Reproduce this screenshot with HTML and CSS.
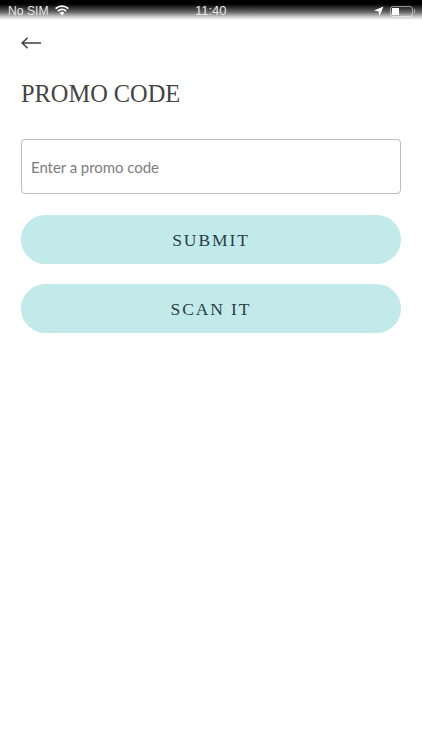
FILE: index.html
```html
<!DOCTYPE html>
<html lang="en">
<head>
<meta charset="utf-8">
<title>Promo code</title>
<link rel="stylesheet" href="styles.css">
</head>
<body>
<div class="status">
  <div class="status-left">
    <span>No SIM</span>
    <svg class="wifi" viewBox="0 0 16 12" width="16" height="12"><path d="M8 11.5 5.6 8.9a3.4 3.4 0 0 1 4.8 0Z" fill="#fff"/><path d="M3.9 7.1a5.8 5.8 0 0 1 8.2 0M1.6 4.7a9 9 0 0 1 12.8 0" fill="none" stroke="#fff" stroke-width="1.7"/></svg>
  </div>
  <span class="status-time">11:40</span>
  <div class="status-right">
    <svg class="loc" viewBox="0 0 10 10" width="10" height="10"><path d="M9.5.5 0 4.6l4.6.8.9 4.6Z" fill="#fff"/></svg>
    <div class="battery"><div class="battery-fill"></div></div>
    <div class="battery-cap"></div>
  </div>
</div>
<main class="page">
  <button class="back" aria-label="Back">
    <svg viewBox="0 0 22 12" width="22" height="12"><path d="M20 6H1.2M6.6 .8 1.2 6l5.4 5.2" fill="none" stroke="#3f3f3f" stroke-width="1.5"/></svg>
  </button>
  <h1 class="title">PROMO CODE</h1>
  <div class="field"><span class="placeholder">Enter a promo code</span></div>
  <button class="action">SUBMIT</button>
  <button class="action">SCAN IT</button>
</main>
</body>
</html>
```
FILE: styles.css
```css
* { box-sizing: border-box; }
html, body { margin: 0; height: 100%; background: #fff; overflow: hidden; }
body { width: 422px; height: 750px; }
.status {
  height: 20px;
  padding: 2px 7px 0 8px;
  display: flex;
  align-items: center;
  justify-content: space-between;
  position: relative;
  color: #e6e6e6;
  font: 12.2px/14px "Liberation Sans", sans-serif;
  background: linear-gradient(#000 0, #000 4px, #666 12px, #bbb 16px, #fff 20px);
}
.status-left { display: flex; align-items: center; gap: 5px; }
.wifi { margin-top: -3px; }
.status-time { position: absolute; left: 195px; top: 4px; font-size: 13px; }
.status-right { display: flex; align-items: center; }
.loc { margin-right: 6px; }
.battery {
  width: 23px; height: 11px; border: 1px solid rgba(255,255,255,.5); border-radius: 3px; padding: 1px;
}
.battery-fill { width: 7px; height: 100%; background: #fff; }
.battery-cap { width: 1px; height: 4px; background: rgba(255,255,255,.5); margin-left: 1px; }
.page { padding: 0 21px; display: flex; flex-direction: column; }
.back { align-self: flex-start; background: none; border: 0; padding: 0; margin-top: 17px; height: 12px; display: block; line-height: 0; }
.title {
  margin: 30px 0 0;
  font: 400 24.4px/30px "Liberation Serif", serif;
  color: #444;
}
.field {
  margin-top: 30px;
  height: 55px;
  border: 1px solid #bdbdbd;
  border-radius: 4px;
  display: flex;
  align-items: center;
  padding: 0 9px;
}
.placeholder { font: 15px/18px "Lato", sans-serif; letter-spacing: -.05px; color: #7d7d7d; }
.action {
  height: 49px;
  border: 0;
  border-radius: 25px;
  background: #c2eaea;
  color: #2b3f44;
  font: 17.5px/20px "Liberation Serif", serif;
  letter-spacing: 1.9px;
  padding: 0;
  margin-top: 21px;
}
.action + .action { margin-top: 20px; }
```
